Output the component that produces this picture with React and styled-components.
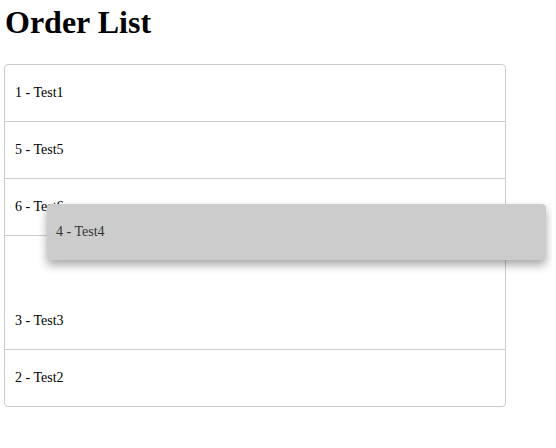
import styled, { createGlobalStyle } from "styled-components";

const GlobalStyle = createGlobalStyle`
  body {
    margin: 4px;
    font-family: "Liberation Serif", "Times New Roman", serif;
    background: #ffffff;
    color: #000000;
  }
`;

const items = [
  { id: 1, name: "Test1" },
  { id: 5, name: "Test5" },
  { id: 6, name: "Test6" },
  { id: 4, name: "Test4", dragging: true },
  { id: 3, name: "Test3" },
  { id: 2, name: "Test2" },
];

function App() {
  const dragged = items.find((i) => i.dragging);
  return (
    <Page>
      <GlobalStyle />
      <Title>Order List</Title>
      <ListWrap>
        <List>
          {items.map((item, idx) => (
            <Row
              key={item.id}
              $placeholder={item.dragging}
              $last={idx === items.length - 1}
            >
              {item.id} - {item.name}
            </Row>
          ))}
        </List>
        <DragGhost>
          {dragged.id} - {dragged.name}
        </DragGhost>
      </ListWrap>
    </Page>
  );
}

const Page = styled.div`
  width: 548px;
`;

const Title = styled.h1`
  font-size: 32px;
  font-weight: bold;
  margin: 0 0 23px 1px;
  line-height: 37px;
`;

const ListWrap = styled.div`
  position: relative;
`;

const List = styled.div`
  width: 500px;
  border: 1px solid #cccccc;
  border-radius: 4px;
  display: flex;
  flex-direction: column;
`;

const Row = styled.div`
  height: 56px;
  display: flex;
  align-items: center;
  padding: 0 10px;
  font-size: 14px;
  border-bottom: ${(p) => (p.$last || p.$placeholder ? "none" : "1px solid #cccccc")};
  color: ${(p) => (p.$placeholder ? "transparent" : "#000")};
  ${(p) => p.$placeholder && "height: 57px;"}
`;

/* the item being dragged, floating above the list */
const DragGhost = styled.div`
  position: absolute;
  left: 43px;
  top: 140px;
  width: 499px;
  height: 56px;
  box-sizing: border-box;
  display: flex;
  align-items: center;
  padding: 0 9px;
  font-size: 14px;
  color: #333333;
  background: #cccccc;
  border-radius: 4px;
  box-shadow: 0 5px 10px rgba(0, 0, 0, 0.35);
`;

export default App;
